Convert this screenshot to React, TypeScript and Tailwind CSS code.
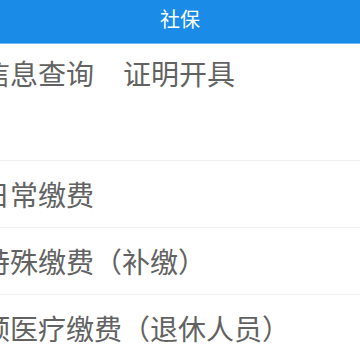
import React from "react";

const rows = ["日常缴费", "特殊缴费（补缴）", "预医疗缴费（退休人员）"];

export default function App() {
  return (
    <div
      className="w-[360px] h-[360px] overflow-hidden bg-white"
      style={{ fontFamily: '"Noto Sans CJK SC", "Noto Sans", sans-serif' }}
    >
      {/* header */}
      <div className="h-[44px] bg-[#1a8ce8] border-b border-[#6fb6f2] flex items-center justify-center">
        <span className="text-[20px] leading-none text-white pb-[5px]">社保</span>
      </div>

      {/* tabs */}
      <div className="h-[117px] border-b border-[#efeff4] pt-[9px]">
        <div className="flex -ml-[18px] text-[28px] leading-[40px] text-[#626262]">
          <span>信息查询</span>
          <span className="ml-[29px]">证明开具</span>
        </div>
      </div>

      {/* list */}
      {rows.map((r) => (
        <div
          key={r}
          className="h-[67px] border-b border-[#efeff4] flex items-center"
        >
          <span className="-ml-[18px] text-[28px] leading-[40px] text-[#626262] whitespace-nowrap">
            {r}
          </span>
        </div>
      ))}
    </div>
  );
}
